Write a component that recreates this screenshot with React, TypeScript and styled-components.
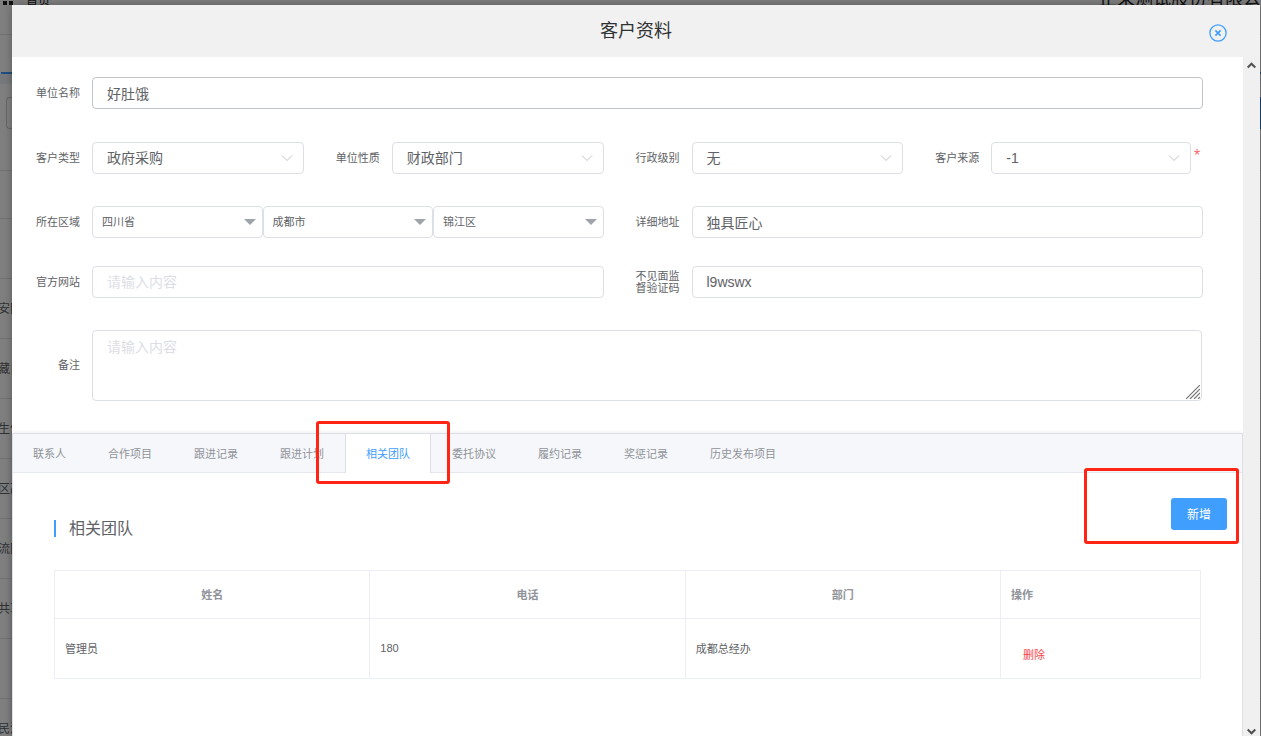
import React from "react";
import styled, { createGlobalStyle } from "styled-components";

const Global = createGlobalStyle`
  * { box-sizing: border-box; }
  body { margin: 0; }
  body, input, select, textarea, button {
    font-family: "Liberation Sans", "Noto Sans CJK SC", sans-serif;
  }
  body { font-size: 11px; color: #606266; }
`;

const Shell = styled.div`
  position: relative;
  height: 100vh;
  overflow: hidden;
  background: #fff;
`;

const Backdrop = styled.div`
  position: absolute;
  inset: 0;
  background: #fff;
  color: #606266;
`;

const TopBar = styled.div`
  display: flex;
  justify-content: space-between;
  height: 35px;
  padding-left: 3px;
  border-bottom: 1px solid #e6e6e6;
  color: #222;
`;

const Crumb = styled.span`
  display: flex;
  gap: 13px;
  font-size: 12px;
  line-height: 16px;
  margin-top: -7px;
`;

const Company = styled.span`
  font-size: 18px;
  line-height: 22px;
  margin-top: -12px;
`;

const BackTabs = styled.div`
  height: 39px;
  margin-left: 1px;
  border-bottom: 2px solid #409eff;
`;

const BackSearch = styled.div`
  height: 97px;
  padding: 13px 0 0 6px;
  border-top: 10px solid #eef1f6;
  border-bottom: 1px solid #e6e6e6;
`;

const BackField = styled.div`
  height: 32px;
  border: 1px solid #cdcdcd;
  border-right: 24px solid #2a86e0;
  border-radius: 4px 0 0 4px;
`;

const BackRow = styled.div<{ $h?: number }>`
  height: ${(p) => p.$h ?? 60}px;
  border-bottom: 1px solid #e6e6e6;
  font-size: 12px;
  line-height: 60px;
  text-indent: -2px;
  white-space: nowrap;
`;

const Mask = styled.div`
  position: absolute;
  inset: 0;
  padding: 5px 1px 0 12px;
  background: rgba(0, 0, 0, 0.5);
`;

const Dialog = styled.section`
  display: flex;
  flex-direction: column;
  height: 100%;
  background: #fff;
  box-shadow: 0 0 8px rgba(0, 0, 0, 0.3);
`;

const DialogHead = styled.header`
  display: grid;
  grid-template-columns: 50px 1fr 50px;
  align-items: center;
  flex: none;
  height: 52px;
  padding-right: 16px;
  background: #f1f1f1;
`;

const Title = styled.h1`
  grid-column: 2;
  margin: 0;
  padding-left: 16px;
  font-size: 18px;
  font-weight: 400;
  line-height: 24px;
  color: #303133;
  text-align: center;
`;

const CloseButton = styled.button`
  display: flex;
  justify-self: end;
  padding: 4px 17px 0 0;
  border: 0;
  background: none;
  color: #409eff;
`;

const DialogBody = styled.div`
  display: flex;
  flex: 1;
  min-height: 0;
`;

const Content = styled.main`
  display: flex;
  flex-direction: column;
  flex: 1;
  min-width: 0;
`;

const ScrollBar = styled.div`
  display: flex;
  flex-direction: column;
  justify-content: space-between;
  align-items: center;
  width: 17px;
  padding: 5px 0 1px;
  background: #f0f0f0;
  color: #505050;
`;

const Form = styled.form`
  padding: 20px 40px 32px 20px;
`;

const FormRow = styled.div<{ $gap: number; $cols: number }>`
  display: grid;
  grid-template-columns: repeat(${(p) => p.$cols}, 1fr);
  column-gap: 28px;
  margin-bottom: ${(p) => p.$gap}px;
`;

const Field = styled.div`
  display: grid;
  grid-template-columns: 48px 1fr;
  column-gap: 12px;
  align-items: center;
`;

const Label = styled.label`
  padding-bottom: 1px;
  font-size: 11px;
  line-height: 12px;
  text-align: right;
`;

const TextInput = styled.input<{ $strong?: boolean }>`
  width: 100%;
  height: 32px;
  padding: 0 14px 1px;
  border: 1px solid ${(p) => (p.$strong ? "#c0c4cc" : "#dcdfe6")};
  border-radius: 4px;
  outline: 0;
  background: #fff;
  color: #606266;
  font-size: 14px;
  &::placeholder { color: #dcdee4; }
`;

const Note = styled.textarea`
  display: block;
  width: calc(100% - 1px);
  height: 71px;
  padding: 7px 14px;
  border: 1px solid #dcdfe6;
  border-radius: 4px;
  outline: 0;
  resize: none;
  font-size: 14px;
  line-height: 18px;
  &::placeholder { color: #dcdee4; }
`;

const Stack = styled.div`
  display: grid;
  align-items: center;
  min-width: 0;
  & > * { grid-area: 1 / 1; }
  & > svg { justify-self: end; pointer-events: none; }
`;

const Grip = styled.svg`
  align-self: end;
  margin: 0 3px 2px 0;
`;

const SelectBox = styled.select<{ $small?: boolean }>`
  appearance: none;
  width: 100%;
  height: 32px;
  padding: 0 ${(p) => (p.$small ? 9 : 14)}px;
  border: 1px solid #dcdfe6;
  border-radius: 4px;
  outline: 0;
  background: #fff;
  color: #606266;
  font-size: ${(p) => (p.$small ? 11 : 14)}px;
`;

const Chevron = styled.svg`
  margin-right: 11px;
`;

const Caret = styled.svg`
  margin-right: 7px;
`;

const Regions = styled.div`
  display: grid;
  grid-template-columns: repeat(3, 1fr);
`;

const Required = styled.div`
  display: grid;
  grid-template-columns: 1fr 12px;
  & > span {
    padding-left: 3px;
    color: #f56c6c;
    font-size: 16px;
    line-height: 28px;
  }
`;

const TabPanel = styled.section`
  flex: 1;
  border: 1px solid #dcdfe6;
  border-bottom: 0;
  box-shadow: 0 0 4px rgba(0, 0, 0, 0.1);
`;

const TabList = styled.div`
  display: flex;
  height: 39px;
  border-bottom: 1px solid #e4e7ed;
  background: #f5f7fa;
`;

const Tab = styled.button<{ $active?: boolean }>`
  height: 39px;
  padding: 0 20px 1px;
  border: solid ${(p) => (p.$active ? "#dcdfe6" : "transparent")};
  border-width: 0 1px;
  background: ${(p) => (p.$active ? "#fff" : "transparent")};
  color: ${(p) => (p.$active ? "#409eff" : "#909399")};
  font-size: 11px;
  white-space: nowrap;
  &:first-child { padding-left: 19px; }
`;

const ActiveTab = styled(Tab)`
  &:first-child { padding-left: 20px; }
`;

const Marked = styled.div`
  position: relative;
`;

const MarkFrame = styled.span<{ $inset: string }>`
  position: absolute;
  inset: ${(p) => p.$inset};
  border: 3px solid #ff2414;
  border-radius: 3px;
  pointer-events: none;
  z-index: 1;
`;

const Actions = styled.div`
  display: flex;
  justify-content: flex-end;
  align-items: flex-start;
  padding: 25px 15px 0;
  height: 47px;
`;

const AddButton = styled.button`
  display: block;
  width: 56px;
  height: 32px;
  padding: 0 0 2px;
  border: 0;
  border-radius: 3px;
  background: #409eff;
  color: #fff;
  font-size: 12px;
`;

const SectionTitle = styled.h2`
  margin: 0 41px 33px;
  padding-left: 13px;
  border-left: 2px solid #409eff;
  font-size: 16px;
  font-weight: 400;
  line-height: 17px;
`;

const TeamTable = styled.table`
  width: calc(100% - 82px);
  margin: 0 41px;
  border-collapse: collapse;
  table-layout: fixed;
  th, td {
    padding: 0 10px 2px;
    border: 1px solid #ebeef5;
    font-size: 11px;
    text-align: left;
  }
  th { height: 48px; color: #909399; text-align: center; }
  th:last-child { width: 200px; text-align: left; }
  td { height: 60px; }
`;

const DeleteButton = styled.button`
  padding: 12px 12px 0;
  border: 0;
  background: none;
  color: #f5474b;
  font-size: 11px;
`;

function Select(props: { id: string; value: string }) {
  return (
    <Stack>
      <SelectBox id={props.id}>
        <option>{props.value}</option>
      </SelectBox>
      <Chevron width="12" height="8" viewBox="0 0 12 8" fill="none" stroke="#c0c4cc">
        <path d="M1 1.5l5 5 5-5" />
      </Chevron>
    </Stack>
  );
}

function RegionSelect(props: { id?: string; name: string; value: string }) {
  return (
    <Stack>
      <SelectBox $small id={props.id} aria-label={props.name}>
        <option>{props.value}</option>
      </SelectBox>
      <Caret width="12" height="6" viewBox="0 0 12 6" fill="#9fa3ab">
        <path d="M0 0h12L6 6z" />
      </Caret>
    </Stack>
  );
}

const ROWS = ["安区", "藏自", "生保", "区高", "流区", "共享", "", "民法"];
const TABS_BEFORE = ["联系人", "合作项目", "跟进记录", "跟进计划"];
const TABS_AFTER = ["委托协议", "履约记录", "奖惩记录", "历史发布项目"];

export default function App() {
  return (
    <Shell>
      <Global />
      <Backdrop aria-hidden="true">
        <TopBar>
          <Crumb>
            <svg width="10" height="12" viewBox="0 0 10 12" fill="#222">
              <path d="M0 2h4v4H0zM6 2h4v4H6zM0 8h4v4H0zM6 8h4v4H6z" />
            </svg>
            首页
          </Crumb>
          <Company>正采测试股份有限公</Company>
        </TopBar>
        <BackTabs />
        <BackSearch>
          <BackField />
        </BackSearch>
        <BackRow $h={48} />
        <BackRow />
        {ROWS.map((text, i) => (
          <BackRow key={i}>{text}</BackRow>
        ))}
      </Backdrop>
      <Mask>
        <Dialog role="dialog" aria-labelledby="dialog-title">
          <DialogHead>
            <Title id="dialog-title">客户资料</Title>
            <CloseButton type="button" aria-label="关闭">
              <svg width="18" height="18" viewBox="0 0 18 18" fill="none" stroke="currentColor">
                <circle cx="9" cy="9" r="8.1" strokeWidth="1.3" />
                <path d="M6.4 6.4l5.2 5.2M11.6 6.4l-5.2 5.2" strokeWidth="1.6" />
              </svg>
            </CloseButton>
          </DialogHead>
          <DialogBody>
            <Content>
              <Form>
                <FormRow $gap={33} $cols={1}>
                  <Field>
                    <Label htmlFor="name">单位名称</Label>
                    <TextInput id="name" $strong defaultValue="好肚饿" />
                  </Field>
                </FormRow>
                <FormRow $gap={32} $cols={4}>
                  <Field>
                    <Label htmlFor="type">客户类型</Label>
                    <Select id="type" value="政府采购" />
                  </Field>
                  <Field>
                    <Label htmlFor="nature">单位性质</Label>
                    <Select id="nature" value="财政部门" />
                  </Field>
                  <Field>
                    <Label htmlFor="level">行政级别</Label>
                    <Select id="level" value="无" />
                  </Field>
                  <Field>
                    <Label htmlFor="source">客户来源</Label>
                    <Required>
                      <Select id="source" value="-1" />
                      <span>*</span>
                    </Required>
                  </Field>
                </FormRow>
                <FormRow $gap={28} $cols={2}>
                  <Field>
                    <Label htmlFor="province">所在区域</Label>
                    <Regions>
                      <RegionSelect id="province" name="省" value="四川省" />
                      <RegionSelect name="市" value="成都市" />
                      <RegionSelect name="区" value="锦江区" />
                    </Regions>
                  </Field>
                  <Field>
                    <Label htmlFor="address">详细地址</Label>
                    <TextInput id="address" defaultValue="独具匠心" />
                  </Field>
                </FormRow>
                <FormRow $gap={32} $cols={2}>
                  <Field>
                    <Label htmlFor="site">官方网站</Label>
                    <TextInput id="site" placeholder="请输入内容" />
                  </Field>
                  <Field>
                    <Label htmlFor="code">不见面监督验证码</Label>
                    <TextInput id="code" defaultValue="l9wswx" />
                  </Field>
                </FormRow>
                <FormRow $gap={0} $cols={1}>
                  <Field>
                    <Label htmlFor="note">备注</Label>
                    <Stack>
                      <Note id="note" placeholder="请输入内容" />
                      <Grip width="14" height="14" viewBox="0 0 14 14" stroke="#777" strokeWidth="1.2">
                        <path d="M0 14L14 0M4 14L14 4M8 14l6-6M12 14l2-2" />
                      </Grip>
                    </Stack>
                  </Field>
                </FormRow>
              </Form>
              <TabPanel>
                <TabList role="tablist">
                  {TABS_BEFORE.map((t) => (
                    <Tab key={t} role="tab">{t}</Tab>
                  ))}
                  <Marked>
                    <ActiveTab $active role="tab" aria-selected="true">相关团队</ActiveTab>
                    <MarkFrame $inset="-13px -19px -12px -29px" />
                  </Marked>
                  {TABS_AFTER.map((t) => (
                    <Tab key={t} role="tab">{t}</Tab>
                  ))}
                </TabList>
                <Actions>
                  <Marked>
                    <AddButton type="button">新增</AddButton>
                    <MarkFrame $inset="-30px -12px -14px -87px" />
                  </Marked>
                </Actions>
                <SectionTitle>相关团队</SectionTitle>
                <TeamTable>
                  <thead>
                    <tr>
                      <th>姓名</th>
                      <th>电话</th>
                      <th>部门</th>
                      <th>操作</th>
                    </tr>
                  </thead>
                  <tbody>
                    <tr>
                      <td>管理员</td>
                      <td>180</td>
                      <td>成都总经办</td>
                      <td><DeleteButton type="button">删除</DeleteButton></td>
                    </tr>
                  </tbody>
                </TeamTable>
              </TabPanel>
            </Content>
            <ScrollBar aria-hidden="true">
              <svg width="9" height="7" viewBox="0 0 9 7" fill="none" stroke="currentColor" strokeWidth="2">
                <path d="M0.7 5.5l3.8-3.8 3.8 3.8" />
              </svg>
              <svg width="9" height="7" viewBox="0 0 9 7" fill="none" stroke="currentColor" strokeWidth="2">
                <path d="M0.7 1.5l3.8 3.8 3.8-3.8" />
              </svg>
            </ScrollBar>
          </DialogBody>
        </Dialog>
      </Mask>
    </Shell>
  );
}
